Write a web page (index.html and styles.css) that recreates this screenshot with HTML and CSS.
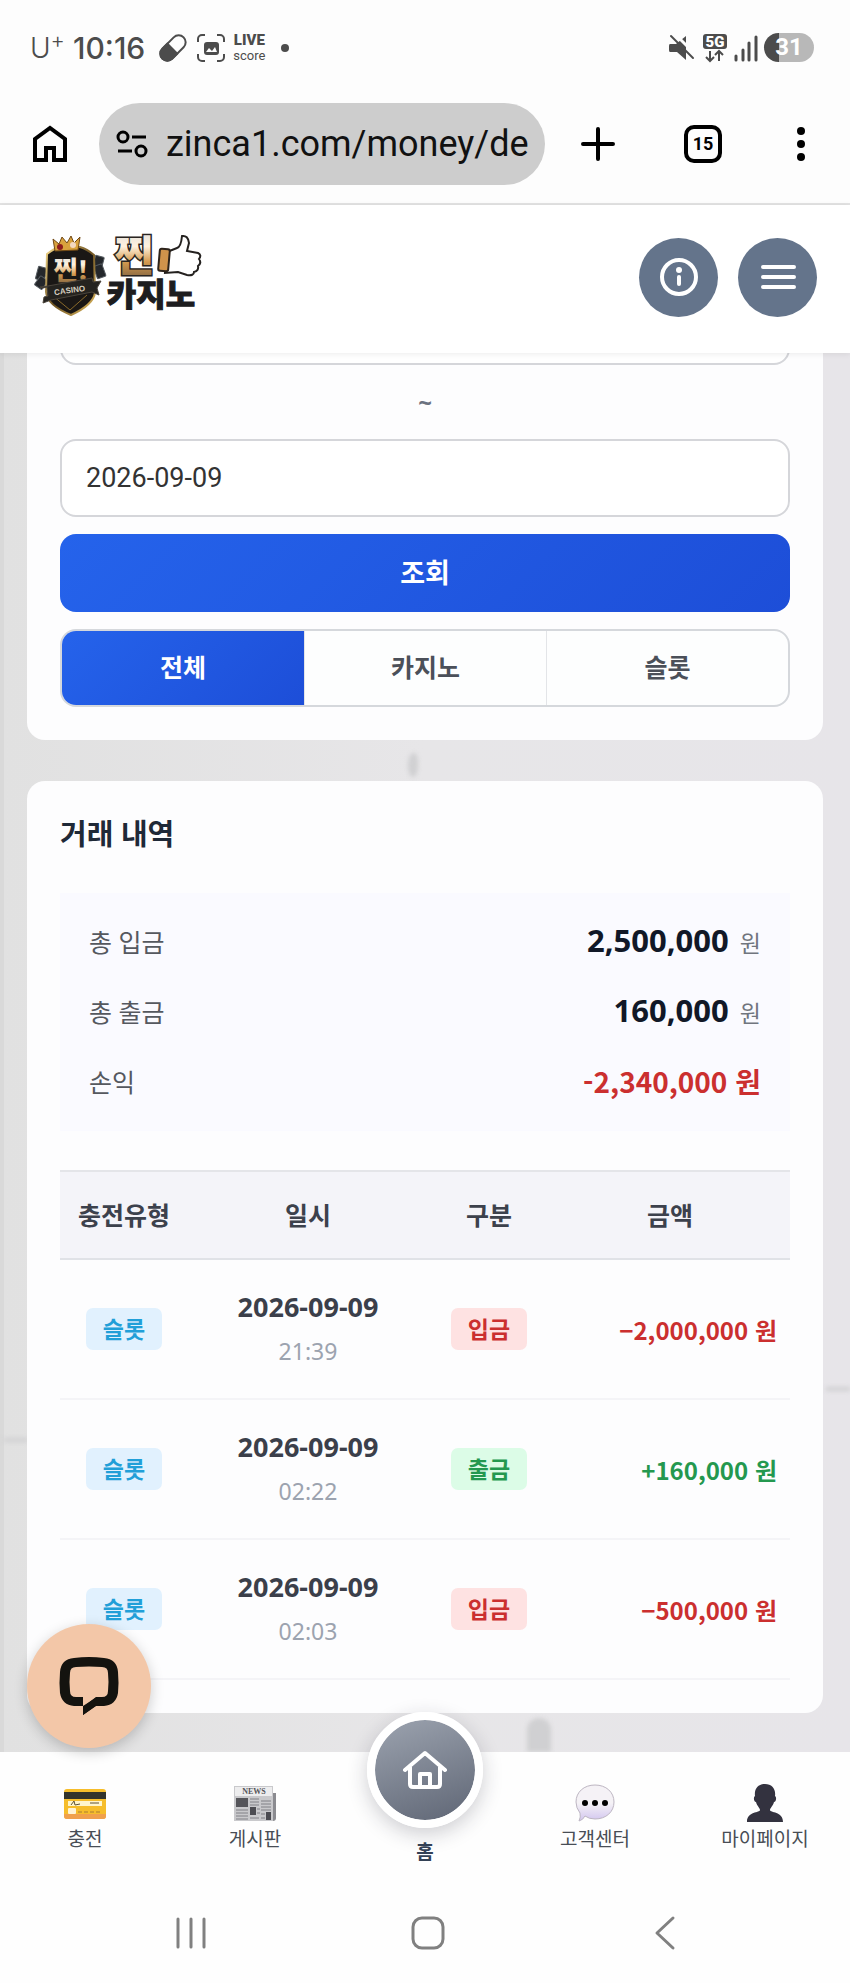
FILE: index.html
```html
<!DOCTYPE html>
<html lang="ko">
<head>
    <meta charset="UTF-8">
    <meta name="viewport" content="width=device-width, initial-scale=1.0">
    <title>거래 내역</title>
    <link rel="stylesheet" href="styles.css">
</head>
<body>

    <!-- phone status bar -->
    <div class="status-bar">
        <div class="status-left">
            <span class="carrier">U<sup>+</sup></span>
            <span class="clock">10:16</span>
            <svg class="status-pill" width="28" height="28" viewBox="0 0 28 28">
                <g transform="rotate(-45 14 14)">
                    <rect x="-1" y="7" width="30" height="14" rx="7" fill="none" stroke="#4c4c4c" stroke-width="2"/>
                    <path d="M14 6H6a8 8 0 0 0 0 16h8z" fill="#4c4c4c"/>
                </g>
            </svg>
            <svg width="28" height="28" viewBox="0 0 28 28">
                <path d="M1 8V5a4 4 0 0 1 4-4h3M20 1h3a4 4 0 0 1 4 4v3M27 20v3a4 4 0 0 1-4 4h-3M8 27H5a4 4 0 0 1-4-4v-3" fill="none" stroke="#4c4c4c" stroke-width="2"/>
                <rect x="7" y="8" width="15" height="13" rx="3" fill="#4c4c4c"/>
                <path d="M9 18l3-4 3 3 3-4 2 5z" fill="#fdfdfd"/>
            </svg>
            <span class="live"><b>LIVE</b><span>score</span></span>
            <span class="dot"></span>
        </div>
        <div class="status-right">
            <svg width="28" height="28" viewBox="0 0 28 28">
                <path d="M2 10h6l10-8v24l-9-8H2q-1 0-1-2v-4q0-2 1-2z" fill="#4c4c4c"/>
                <path d="M6 -1l23 23" stroke="#fdfdfd" stroke-width="3"/>
                <path d="M3 2l22 22" stroke="#4c4c4c" stroke-width="2" stroke-linecap="round"/>
            </svg>
            <svg width="26" height="28" viewBox="0 0 26 28">
                <rect x="1" y="0" width="24" height="15" rx="3" fill="#4c4c4c"/>
                <text x="13" y="13" class="svg-5g">5G</text>
                <path d="M8 17v10M4 23l4 4 4-4M17 27V17M13 21l4-4 4 4" fill="none" stroke="#4c4c4c" stroke-width="2"/>
            </svg>
            <svg width="24" height="28" viewBox="0 0 24 28">
                <path d="M2 22v4M9 16v10M15 9v17M22 3v23" stroke="#4c4c4c" stroke-width="3" stroke-linecap="round"/>
            </svg>
            <span class="battery">31</span>
        </div>
    </div>

    <!-- browser bar -->
    <div class="browser-bar">
        <button class="icon-button" aria-label="홈페이지">
            <svg width="34" height="38" viewBox="0 0 34 38">
                <path d="M2 35V14L17 3l15 11v21H21V23h-8v12z" fill="none" stroke="#000" stroke-width="4"/>
            </svg>
        </button>
        <div class="address">
            <svg width="32" height="28" viewBox="0 0 32 28">
                <g fill="none" stroke="#000" stroke-width="3">
                    <circle cx="7" cy="7" r="5"/>
                    <circle cx="25" cy="21" r="5"/>
                    <path d="M16 7h14M2 21h14"/>
                </g>
            </svg>
            <input class="address-input" type="text" aria-label="주소" value="zinca1.com/money/de">
        </div>
        <div class="browser-actions">
            <button class="icon-button" aria-label="새 탭">
                <svg width="34" height="34" viewBox="0 0 34 34">
                    <path d="M17 2v30M2 17h30" stroke="#000" stroke-width="4" stroke-linecap="round"/>
                </svg>
            </button>
            <button class="tab-count" aria-label="탭 15개">15</button>
            <button class="icon-button" aria-label="메뉴">
                <svg width="20" height="36" viewBox="0 0 20 36">
                    <circle cx="10" cy="5" r="4"/><circle cx="10" cy="18" r="4"/><circle cx="10" cy="31" r="4"/>
                </svg>
            </button>
        </div>
    </div>

    <header class="site-header">
        <a href="#" class="logo" aria-label="찐카지노">
            <svg width="170" height="84" viewBox="0 0 170 84">
                <defs>
                    <linearGradient id="gold" x1="0" y1="0" x2="0" y2="1">
                        <stop offset="0.1" stop-color="#ddd"/>
                        <stop offset="0.4" stop-color="#fff2df"/>
                        <stop offset="0.65" stop-color="#d59b4f"/>
                        <stop offset="0.9" stop-color="#8d6b43"/>
                    </linearGradient>
                    <linearGradient id="rim" x1="0" y1="0" x2="1" y2="1">
                        <stop offset="0" stop-color="#f5d98b"/>
                        <stop offset="0.5" stop-color="#6f5422"/>
                        <stop offset="1" stop-color="#e3bd62"/>
                    </linearGradient>
                </defs>
                <g fill="#24272b" stroke="#555b60" stroke-width="1">
                    <rect x="5" y="32" width="9" height="13" rx="1" transform="rotate(15 9 38)"/>
                    <rect x="5" y="42" width="9" height="11" rx="1" transform="rotate(35 9 47)"/>
                    <rect x="62" y="21" width="9" height="13" rx="1" transform="rotate(15 66 27)"/>
                    <rect x="63" y="30" width="9" height="13" rx="1" transform="rotate(-20 67 36)"/>
                </g>
                <path d="M15 19q8-6 12-7h21q7 2 14 8l1 38q-2 12-24 22Q15 70 14 57z" fill="#1a1715" stroke="url(#rim)" stroke-width="2"/>
                <path d="M21 61l17 14 17-15" fill="none" stroke="#8a6a2a" stroke-width="1"/>
                <path d="M23 16l-2-12 6 5 3-7 5 6 4-7 3 7 6-6-2 13z" fill="#d9a23d" stroke="#704815" stroke-width="1"/>
                <circle cx="28" cy="12" r="3" fill="#8e1c1c"/>
                <circle cx="41" cy="10" r="3" fill="#f4d9c0"/>
                <text x="39" y="45" class="shield-text">찐!</text>
                <path d="M11 53l4-1 1 9-4 1-1 6 8-3 41-8 7 3-2-7 4-7-8 1-1-4-44 8-8 1z" fill="#25231f" stroke="#4a443b" stroke-width="1"/>
                <text x="38" y="58" class="shield-sub" transform="rotate(-8 38 58)">CASINO</text>
                <text x="102" y="36" class="logo-top">찐</text>
                <text x="119" y="71" class="logo-bottom">카지노</text>
                <path d="M135 17l10-4q4-1 5-12 6-1 7 7l-2 8 11 2q4 2 1 6 3 4-1 7 1 5-4 6 0 4-7 3l-9-3-13 1z" fill="#fff" stroke="#24211f" stroke-width="2"/>
                <rect x="127" y="14" width="10" height="22" rx="2" fill="#cf934b" stroke="#2c231b" stroke-width="2" transform="rotate(5 132 25)"/>
            </svg>
        </a>
        <div class="header-buttons">
            <button class="round-button" aria-label="안내">
                <svg width="40" height="40" viewBox="0 0 40 40">
                    <circle cx="20" cy="20" r="17" fill="none" stroke="#fff" stroke-width="4"/>
                    <circle cx="20" cy="13" r="3" fill="#fff"/>
                    <path d="M20 20v7" stroke="#fff" stroke-width="4" stroke-linecap="round"/>
                </svg>
            </button>
            <button class="round-button" aria-label="전체 메뉴">
                <svg width="40" height="40" viewBox="0 0 40 40">
                    <path d="M5 10h31M5 20h31M5 30h31" stroke="#fff" stroke-width="4" stroke-linecap="round"/>
                </svg>
            </button>
        </div>
    </header>

    <main class="content">
        <span class="mark mark-drip"></span>
        <span class="mark mark-figure"></span>
        <span class="mark mark-left"></span>
        <span class="mark mark-right"></span>

        <section class="card filter">
            <input class="date-input" type="text" aria-label="시작일" value="2026-09-09">
            <span class="tilde">~</span>
            <input class="date-input" type="text" aria-label="종료일" value="2026-09-09">
            <button class="search-button">조회</button>
            <div class="tabs">
                <button class="tab active">전체</button>
                <button class="tab">카지노</button>
                <button class="tab">슬롯</button>
            </div>
        </section>

        <section class="card history">
            <h2>거래 내역</h2>
            <dl class="summary">
                <div class="summary-row">
                    <dt>총 입금</dt>
                    <dd>2,500,000 <small>원</small></dd>
                </div>
                <div class="summary-row">
                    <dt>총 출금</dt>
                    <dd>160,000 <small>원</small></dd>
                </div>
                <div class="summary-row">
                    <dt>손익</dt>
                    <dd class="loss">-2,340,000 원</dd>
                </div>
            </dl>

            <table class="history-table">
                <colgroup>
                    <col class="col-type"><col class="col-date"><col class="col-kind"><col class="col-amount">
                </colgroup>
                <thead>
                    <tr>
                        <th>충전유형</th>
                        <th>일시</th>
                        <th>구분</th>
                        <th>금액</th>
                    </tr>
                </thead>
                <tbody>
                    <tr>
                        <td><span class="badge slot">슬롯</span></td>
                        <td><span class="date">2026-09-09</span><span class="time">21:39</span></td>
                        <td><span class="badge deposit">입금</span></td>
                        <td class="amount minus">−2,000,000 원</td>
                    </tr>
                    <tr>
                        <td><span class="badge slot">슬롯</span></td>
                        <td><span class="date">2026-09-09</span><span class="time">02:22</span></td>
                        <td><span class="badge withdraw">출금</span></td>
                        <td class="amount plus">+160,000 원</td>
                    </tr>
                    <tr>
                        <td><span class="badge slot">슬롯</span></td>
                        <td><span class="date">2026-09-09</span><span class="time">02:03</span></td>
                        <td><span class="badge deposit">입금</span></td>
                        <td class="amount minus">−500,000 원</td>
                    </tr>
                </tbody>
            </table>
        </section>
    </main>

    <nav class="bottom-nav">
        <a href="#" class="nav-item">
            <svg width="44" height="40" viewBox="0 0 44 40">
                <rect x="1" y="6" width="42" height="30" rx="3" fill="#f6bd2b"/>
                <path d="M1 31h42v2q0 3-3 3H4q-3 0-3-3z" fill="#f0a04c"/>
                <rect x="1" y="9" width="42" height="7" fill="#33332b"/>
                <rect x="5" y="18" width="34" height="5" fill="#fff5cc"/>
                <path d="M8 22l3-4 1 4 5-1M27 20h9" fill="none" stroke="#5d5137" stroke-width="1"/>
                <rect x="5" y="25" width="8" height="6" rx="1" fill="#fff3d4"/>
                <path d="M15 29h24" stroke="#cf9c30" stroke-width="2" stroke-dasharray="4 2"/>
            </svg>
            <span>충전</span>
        </a>
        <a href="#" class="nav-item">
            <svg width="44" height="40" viewBox="0 0 44 40">
                <path d="M38 10h5v25q0 3-3 3h-4z" fill="#8b8b90"/>
                <rect x="1" y="3" width="39" height="35" fill="#c9c9cc"/>
                <rect x="2" y="4" width="37" height="9" fill="#ededee"/>
                <text x="21" y="11" class="news-text">NEWS</text>
                <rect x="3" y="15" width="12" height="9" fill="#55555a"/>
                <rect x="17" y="24" width="6" height="8" fill="#4c4c52"/>
                <rect x="33" y="29" width="5" height="8" fill="#4c4c52"/>
                <path d="M17 16h9M17 19h9M17 22h9M28 18h10M28 21h10M28 24h10M28 27h10M3 27h12M3 30h12M3 33h12M3 36h12M17 35h9M28 31h4M28 35h4M24 26h3M24 30h3" stroke="#808086" stroke-width="1"/>
            </svg>
            <span>게시판</span>
        </a>
        <a href="#" class="nav-item nav-home">
            <span class="home-circle">
                <svg width="52" height="52" viewBox="0 0 52 52">
                    <path d="M6 26L26 9l20 17M11 23v17q0 3 3 3h24q3 0 3-3V23M21 43V30h10v13" fill="none" stroke="#fff" stroke-width="4" stroke-linecap="round" stroke-linejoin="round"/>
                </svg>
            </span>
            <span>홈</span>
        </a>
        <a href="#" class="nav-item">
            <svg width="44" height="40" viewBox="0 0 44 40">
                <defs>
                    <linearGradient id="bubble" x1="0" y1="0" x2="0" y2="1">
                        <stop offset="0.5" stop-color="#f5f2f6"/>
                        <stop offset="1" stop-color="#d2c5ef"/>
                    </linearGradient>
                </defs>
                <path d="M22 2c11 0 19 7 19 17s-8 17-19 17q-6 0-10-3-2 4-6 5 2-4 1-8-4-5-4-11C3 9 11 2 22 2z" fill="url(#bubble)" stroke="#bdb6c2" stroke-width="1"/>
                <circle cx="12" cy="20" r="3"/><circle cx="22" cy="20" r="3"/><circle cx="32" cy="20" r="3"/>
            </svg>
            <span>고객센터</span>
        </a>
        <a href="#" class="nav-item">
            <svg width="44" height="40" viewBox="0 0 44 40">
                <path d="M22 1c7 0 11 5 10 12 2 1 1 6-1 6-1 4-4 6-4 8 0 3 13 1 13 12H4c0-11 13-9 13-12 0-2-3-4-4-8-2 0-3-5-1-6C11 6 15 1 22 1z" fill="#33323f"/>
            </svg>
            <span>마이페이지</span>
        </a>
    </nav>

    <div class="system-nav">
        <button aria-label="최근 앱">
            <svg width="34" height="34" viewBox="0 0 34 34">
                <path d="M4 3v28M17 3v28M30 3v28" stroke="#808080" stroke-width="3" stroke-linecap="round"/>
            </svg>
        </button>
        <button aria-label="홈 화면">
            <svg width="34" height="34" viewBox="0 0 34 34">
                <rect x="2" y="2" width="30" height="30" rx="9" fill="none" stroke="#808080" stroke-width="3"/>
            </svg>
        </button>
        <button aria-label="뒤로">
            <svg width="34" height="34" viewBox="0 0 34 34">
                <path d="M25 2L9 17l16 15" fill="none" stroke="#808080" stroke-width="3" stroke-linecap="round" stroke-linejoin="round"/>
            </svg>
        </button>
    </div>

    <button class="chat-button" aria-label="채팅 상담">
        <svg width="60" height="60" viewBox="0 0 60 60">
            <path d="M15 2q15-2 30 0 13 1 14 14 1 11 0 21-2 12-14 13h-8L24 59V50h-9Q3 49 1 37q-1-10 0-21Q2 3 15 2z" fill="#14130f"/>
            <path d="M17 11q13-1 26 0 6 0 6 6 1 9 0 18 0 6-6 6h-6l-13 10V41h-7q-6 0-6-6-1-9 0-18 0-6 6-6z" fill="#f3c7a8"/>
            <path d="M24 50l14-9v8L24 59z" fill="#14130f"/>
        </svg>
    </button>

</body>
</html>
```

FILE: styles.css
```css
* {
    box-sizing: border-box;
}

body {
    font-family: "Noto Sans", "Noto Sans CJK KR", sans-serif;
    margin: 0;
    background-color: #fdfdfd;
    color: #1f2937;
    display: flex;
    flex-direction: column;
    height: 100vh;
    overflow: hidden;
}

button,
input {
    font-family: inherit;
    margin: 0;
    padding: 0;
    border: none;
    background: none;
}

button {
    cursor: pointer;
}

svg {
    display: block;
    flex: none;
    overflow: visible;
}

a {
    color: inherit;
    text-decoration: none;
}

/* status bar */
.status-bar {
    display: flex;
    justify-content: space-between;
    align-items: center;
    height: 95px;
    flex: none;
    padding: 0 36px 0 30px;
    color: #4c4c4c;
    font-family: Roboto, sans-serif;
}

.status-left,
.status-right {
    display: flex;
    align-items: center;
    gap: 8px;
}

.status-right {
    gap: 6px;
}

.carrier {
    font-family: Inter, sans-serif;
    font-weight: 300;
    font-size: 28px;
    line-height: 32px;
}

.carrier sup {
    font-size: 22px;
    line-height: 0;
}

.clock {
    font-family: Inter, sans-serif;
    font-weight: 500;
    font-size: 30px;
    line-height: 32px;
}

.status-pill {
    margin: 0 2px 0 6px;
}

.live {
    display: flex;
    flex-direction: column;
    align-items: center;
    font-size: 13px;
    line-height: 15px;
}

.live b {
    font-weight: 900;
    font-size: 15px;
}

.dot {
    width: 8px;
    height: 8px;
    margin-left: 8px;
    border-radius: 50%;
    background-color: #4c4c4c;
}

.svg-5g {
    font: 900 15px Roboto, sans-serif;
    fill: #fff;
    text-anchor: middle;
}

.battery {
    width: 50px;
    height: 29px;
    border-radius: 15px;
    background: linear-gradient(90deg, #4c4c4c 15px, #b8b8b8 15px);
    color: #fff;
    font: 700 24px/29px Roboto, sans-serif;
    text-align: center;
}

/* browser bar */
.browser-bar {
    display: flex;
    align-items: center;
    gap: 32px;
    height: 110px;
    flex: none;
    padding: 0 39px 10px 33px;
    border-bottom: 2px solid #e3e3e3;
}

.address {
    display: flex;
    align-items: center;
    gap: 18px;
    flex: 1;
    min-width: 0;
    height: 82px;
    padding: 0 12px 0 17px;
    border-radius: 41px;
    background-color: #cdcdcd;
}

.address-input {
    flex: 1;
    min-width: 0;
    font-family: Roboto, sans-serif;
    font-size: 36px;
    line-height: 48px;
    color: #111;
}

.browser-actions {
    display: flex;
    align-items: center;
    justify-content: space-between;
    width: 230px;
    margin-left: 4px;
}

.tab-count {
    width: 38px;
    height: 38px;
    border: 4px solid #000;
    border-radius: 10px;
    font: 700 18px/30px Roboto, sans-serif;
    color: #000;
}

/* site header */
.site-header {
    display: flex;
    justify-content: space-between;
    align-items: center;
    height: 148px;
    flex: none;
    padding: 0 33px 4px 32px;
    background-color: #fff;
    box-shadow: 0 1px 6px rgba(0, 0, 0, 0.08);
    z-index: 1;
}

.header-buttons {
    display: flex;
    gap: 20px;
}

.round-button {
    display: flex;
    justify-content: center;
    align-items: center;
    width: 79px;
    height: 79px;
    border-radius: 50%;
    background-color: #64748b;
}

.shield-text {
    font: 900 26px "Noto Sans CJK KR", sans-serif;
    fill: url(#gold);
    text-anchor: middle;
}

.shield-sub {
    font: 700 8px "Liberation Sans", sans-serif;
    fill: #d8cfc0;
    text-anchor: middle;
}

.logo-top {
    font: 900 42px "Noto Sans CJK KR", sans-serif;
    fill: url(#gold);
    stroke: #2a2521;
    stroke-width: 3;
    paint-order: stroke;
    text-anchor: middle;
}

.logo-bottom {
    font: 900 32px "Noto Sans CJK KR", sans-serif;
    fill: #1d1d1f;
    stroke: #1d1d1f;
    stroke-width: 1;
    text-anchor: middle;
}

/* scrolled content, the newest part sits above the bottom nav */
.content {
    position: relative;
    flex: 1;
    min-height: 0;
    display: flex;
    flex-direction: column;
    justify-content: flex-end;
    gap: 41px;
    padding: 0 27px 39px;
    overflow: hidden;
    background: linear-gradient(90deg, #d9d9d9 4px, #e1e1e1 4px, #e7e6e8 50%, #e7e5e9);
}

.card {
    position: relative;
    flex: none;
    padding: 33px;
    border-radius: 18px;
    background-color: #fdfdfe;
}

.filter {
    display: flex;
    flex-direction: column;
    gap: 17px;
}

.date-input {
    width: 100%;
    height: 78px;
    padding: 0 24px;
    border: 2px solid #d5d6da;
    border-radius: 16px;
    background-color: #fff;
    font-family: Roboto, sans-serif;
    font-size: 27px;
    color: #333;
}

.tilde {
    height: 40px;
    font-size: 24px;
    font-weight: 700;
    line-height: 40px;
    text-align: center;
    color: #6b7280;
}

.search-button {
    height: 78px;
    padding-bottom: 4px;
    border-radius: 16px;
    background: linear-gradient(135deg, #2563eb, #1d4ed8);
    color: #fff;
    font-size: 27px;
    font-weight: 700;
}

.tabs {
    display: grid;
    grid-template-columns: repeat(3, 1fr);
    height: 78px;
    border: 2px solid #d5d8dc;
    border-radius: 16px;
    overflow: hidden;
    background-color: #fdfefe;
}

.tab {
    padding-bottom: 4px;
    font-size: 25px;
    font-weight: 700;
    color: #4b5059;
}

.tab + .tab {
    border-left: 1px solid #e3e5e8;
}

.tab.active {
    background: linear-gradient(135deg, #2563eb, #1d4ed8);
    color: #fff;
}

.history h2 {
    margin: 0 0 39px;
    font-size: 29px;
    line-height: 40px;
}

.summary {
    display: flex;
    flex-direction: column;
    gap: 30px;
    margin: 0 0 39px;
    padding: 28px 29px 30px;
    background-color: #fafaff;
}

.summary-row {
    display: flex;
    justify-content: space-between;
    align-items: center;
    height: 40px;
}

.summary dt {
    font-size: 25px;
    color: #55585f;
}

.summary dd {
    margin: 0;
    font-size: 31px;
    font-weight: 700;
    line-height: 40px;
    color: #111827;
}

.summary small {
    margin-left: 3px;
    font-size: 23px;
    font-weight: 400;
    color: #70757e;
}

.summary .loss {
    font-family: "Noto Sans CJK KR", sans-serif;
    font-size: 28px;
    color: #cb2f2f;
}

/* history table */
.history-table {
    width: 100%;
    table-layout: fixed;
    border-collapse: collapse;
    text-align: center;
}

.col-type {
    width: 128px;
}

.col-date {
    width: 33%;
}

.col-kind {
    width: 122px;
}

.col-amount {
    width: 33%;
}

.history-table th {
    height: 88px;
    padding: 0 0 3px;
    border-top: 2px solid #e4e5e9;
    border-bottom: 2px solid #e0e2e7;
    background-color: #f4f4f9;
    font-size: 25px;
    color: #3c414c;
}

.history-table td {
    height: 140px;
    padding: 0;
    border-bottom: 2px solid #f4f4f7;
}

.badge {
    display: inline-block;
    padding: 0 17px;
    border-radius: 7px;
    font-size: 23px;
    font-weight: 700;
    line-height: 42px;
}

.slot {
    background-color: #e1f1fe;
    color: #219fd8;
}

.deposit {
    background-color: #fee2e2;
    color: #cb2f2f;
}

.withdraw {
    background-color: #dcfce7;
    color: #24984f;
}

.date,
.time {
    display: block;
    line-height: 45px;
}

.date {
    font-size: 27px;
    font-weight: 700;
    color: #3b3f4a;
}

.time {
    font-size: 23px;
    color: #9ca3af;
}

.history-table .amount {
    padding-right: 13px;
    font-family: "Noto Sans CJK KR", sans-serif;
    font-size: 24px;
    font-weight: 700;
    text-align: right;
}

.history-table .minus {
    color: #cb2f2f;
}

.history-table .plus {
    color: #24984f;
}

/* faint marks of the wall behind the cards */
.mark {
    position: absolute;
    background-color: #d0d0d2;
    filter: blur(2px);
}

.mark-drip {
    left: 48%;
    top: 400px;
    width: 10px;
    height: 24px;
    border-radius: 60% 40% 50% 50%;
}

.mark-figure {
    left: 62%;
    bottom: 0;
    width: 24px;
    height: 34px;
    border-radius: 12px 12px 0 0;
}

.mark-left {
    left: 4px;
    top: 1085px;
    width: 24px;
    height: 4px;
}

.mark-right {
    right: 0;
    top: 1034px;
    width: 24px;
    height: 4px;
}

/* bottom nav */
.bottom-nav {
    display: grid;
    grid-template-columns: repeat(5, 1fr);
    height: 128px;
    flex: none;
    background-color: #fefefe;
    z-index: 1;
}

.nav-item {
    display: flex;
    flex-direction: column;
    align-items: center;
    gap: 2px;
    padding-top: 31px;
    font-size: 19px;
    line-height: 28px;
    color: #484d55;
}

.nav-home {
    gap: 10px;
    padding-top: 0;
    font-weight: 700;
    color: #334155;
}

.home-circle {
    display: flex;
    justify-content: center;
    align-items: center;
    width: 116px;
    height: 116px;
    margin-top: -40px;
    border: 8px solid #fff;
    border-radius: 50%;
    background: linear-gradient(160deg, #9ca3af, #5f6675) padding-box;
    box-shadow: 0 6px 20px rgba(30, 30, 50, 0.22);
}

.news-text {
    font: 700 8px "Liberation Serif", serif;
    fill: #55555a;
    text-anchor: middle;
}

/* system nav */
.system-nav {
    display: flex;
    justify-content: space-around;
    align-items: center;
    height: 103px;
    flex: none;
    padding: 3px 66px 0 72px;
    background-color: #fefefe;
}

/* floating chat */
.chat-button {
    position: fixed;
    left: 27px;
    bottom: 235px;
    z-index: 2;
    display: flex;
    justify-content: center;
    align-items: center;
    width: 124px;
    height: 124px;
    border-radius: 50%;
    background-color: #f3c7a8;
    box-shadow: 0 4px 14px rgba(0, 0, 0, 0.2);
}
```
